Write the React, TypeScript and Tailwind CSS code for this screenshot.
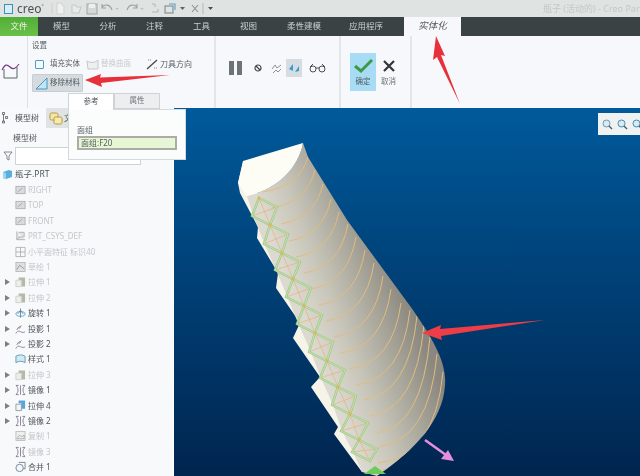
import React from 'react';

const tabs = [
  { label: '模型', w: 'w-[47px]' },
  { label: '分析', w: 'w-[46px]' },
  { label: '注释', w: 'w-[47px]' },
  { label: '工具', w: 'w-[47px]' },
  { label: '视图', w: 'w-[47px]' },
  { label: '柔性建模', w: 'w-[64px]' },
  { label: '应用程序', w: 'w-[60px] mr-[8px]' },
];

type Kind = 'plane' | 'csys' | 'facet' | 'sketch' | 'extrude' | 'extrudeOn' | 'revolve' | 'project' | 'style' | 'mirror' | 'copy' | 'merge';

const treeRows: { label: string; kind: Kind; off?: boolean; arrow?: boolean }[] = [
  { label: 'RIGHT', kind: 'plane', off: true },
  { label: 'TOP', kind: 'plane', off: true },
  { label: 'FRONT', kind: 'plane', off: true },
  { label: 'PRT_CSYS_DEF', kind: 'csys', off: true },
  { label: '小平面特征 标识40', kind: 'facet', off: true },
  { label: '草绘 1', kind: 'sketch', off: true },
  { label: '拉伸 1', kind: 'extrude', off: true, arrow: true },
  { label: '拉伸 2', kind: 'extrude', off: true, arrow: true },
  { label: '旋转 1', kind: 'revolve', arrow: true },
  { label: '投影 1', kind: 'project', arrow: true },
  { label: '投影 2', kind: 'project', arrow: true },
  { label: '样式 1', kind: 'style' },
  { label: '拉伸 3', kind: 'extrude', off: true, arrow: true },
  { label: '镜像 1', kind: 'mirror', arrow: true },
  { label: '拉伸 4', kind: 'extrudeOn', arrow: true },
  { label: '镜像 2', kind: 'mirror', arrow: true },
  { label: '复制 1', kind: 'copy', off: true },
  { label: '镜像 3', kind: 'mirror', off: true },
  { label: '合并 1', kind: 'merge' },
];

const TreeIcon = ({ kind }: { kind: Kind }) => (
  <svg width="11" height="12" viewBox="0 0 12 12" fill="none" strokeWidth="0.9" className="shrink-0">
    {kind === 'plane' && (
      <>
        <rect x="1" y="2" width="10" height="8" fill="#d9dcdc" stroke="#a9adad" />
        <path d="M3 8l5-4" stroke="#9a9e9e" />
      </>
    )}
    {kind === 'csys' && <path d="M2 1v9h9M2 10l3-3M4 2h6v5H4" stroke="#a6aaaa" fill="#e4e6e6" />}
    {kind === 'facet' && <path d="M1 1h10v10H1zM6 1v10M1 6h10" stroke="#a9adad" />}
    {kind === 'sketch' && (
      <>
        <rect x="1" y="1" width="10" height="10" fill="#dfe1e1" stroke="#b0b4b4" />
        <path d="M2 9l3-5 5 4" stroke="#8d9191" />
      </>
    )}
    {kind === 'extrude' && (
      <>
        <path d="M4 1h7v10H7V4H4z" fill="#b9b8a6" />
        <path d="M1 4h6v7H1z" fill="#eceeee" stroke="#c8cbcb" />
      </>
    )}
    {kind === 'extrudeOn' && (
      <>
        <path d="M4 0h7v9H7V3H4z" fill="#57a7dc" />
        <path d="M1 4h6v7H1z" fill="#f3f5f5" stroke="#8c9296" />
      </>
    )}
    {kind === 'revolve' && (
      <>
        <ellipse cx="6" cy="7" rx="5" ry="2.5" stroke="#4a9ad0" />
        <path d="M6 1v10M3 7l3-4 3 4" stroke="#5c7f9a" />
      </>
    )}
    {kind === 'project' && (
      <>
        <path d="M1 11c1-3 3-3 5-2s4 1 5 0" stroke="#8e6f9e" />
        <path d="M2 7c1-3 3-4 4-3M7 2L4 6" stroke="#777" />
      </>
    )}
    {kind === 'style' && <path d="M1 3c3-2 7-2 10 0v7c-3-2-7-2-10 0z" fill="#cfeaf7" stroke="#5b8ca8" />}
    {kind === 'mirror' && <path d="M6 1v10M1 1c3 2 3 8 0 10M11 1c-3 2-3 8 0 10M1 1h3M8 1h3M1 11h3M8 11h3" stroke="#7a6e8c" />}
    {kind === 'copy' && (
      <>
        <rect x="1" y="1" width="10" height="10" fill="#eceeee" stroke="#b9bcbc" />
        <path d="M2 9l3-4 2 2 3-2v4z" stroke="#a6aaaa" />
      </>
    )}
    {kind === 'merge' && (
      <>
        <circle cx="5" cy="7" r="4" fill="#f5f8fa" stroke="#63788a" />
        <path d="M4 1h7v7H9" stroke="#63788a" />
      </>
    )}
  </svg>
);

const TreeRow = ({ label, kind, off, arrow }: { label: string; kind: Kind; off?: boolean; arrow?: boolean }) => (
  <div className="flex h-[15.4px] items-center">
    <span className="flex w-[15px] shrink-0 justify-center">
      {arrow && <span className="h-0 w-0 border-y-[3px] border-l-[5px] border-y-transparent border-l-[#7b8082]" />}
    </span>
    <TreeIcon kind={kind} />
    <span className={`ml-[2px] whitespace-nowrap text-[8px] ${off ? 'text-[#c3c7c9]' : 'text-[#4d5558]'}`}>{label}</span>
  </div>
);

// quick access toolbar, drawn from x=50 of the page
const QuickIcons = () => (
  <svg width="166" height="17" viewBox="50 0 166 17" fill="none" strokeWidth="1.1" className="absolute left-[50px] top-0">
    <path d="M52 3v11" stroke="#ccd0d0" />
    <path d="M57 3h4l3 3v8h-7z" fill="#eef0f0" stroke="#cfd3d3" />
    <path d="M72 13V5h3l2 2h4l-2 6z" fill="#e8eaea" stroke="#c5c9c9" />
    <rect x="87" y="4" width="10" height="10" fill="#d4d8d8" stroke="#a6abab" />
    <rect x="89" y="4" width="6" height="4" fill="#eef0f0" />
    <path d="M102 7c3-3 8-3 10 3M102 4v4h4" stroke="#9aa0a3" />
    <path d="M115 8h4l-2 2z" fill="#c0c4c4" />
    <path d="M137 7c-3-3-8-3-10 3M137 4v4h-4" stroke="#9aa0a3" />
    <path d="M140 8h4l-2 2z" fill="#c0c4c4" />
    <path d="M152 4h3M155 4v3M152 12h6M158 9v3" stroke="#b3b7b7" />
    <rect x="165" y="6" width="8" height="7" stroke="#7d8a92" />
    <path d="M169 4h6v6" stroke="#59a0cc" />
    <path d="M180 7h5l-2.5 3z" fill="#5e6468" />
    <path d="M192 5l6 7M198 5l-6 7" stroke="#8b9093" />
    <path d="M203 3v11" stroke="#b9bdbd" />
    <path d="M208 7h5l-2.5 3z" fill="#4a5154" />
  </svg>
);

const bodyNodes: [number, number][] = [
  [259, 198], [270, 225], [282, 253], [293, 279], [304, 306], [315, 333], [327, 361], [338, 387], [350, 414], [359, 440], [370, 461],
];

const arcs: [number, number, number, number][] = [
  [263, 192, 308, 157], [272, 208, 315, 170], [281, 224, 323, 184], [289, 241, 331, 199],
  [296, 257, 339, 212], [304, 273, 348, 224], [311, 289, 356, 237], [319, 305, 365, 250],
  [326, 321, 374, 263], [334, 337, 383, 276], [341, 353, 391, 289], [349, 369, 401, 303],
  [356, 385, 410, 310], [363, 400, 417, 316], [370, 416, 424, 325], [377, 433, 430, 337],
  [378, 447, 437, 354], [378, 463, 443, 372], [382, 470, 446, 392],
];

const bodyPath =
  'M303 143L308 157L347 220L413 310C432 338 447 362 445 385C443 420 415 450 377 476L362 472L353 452L342 431L333 405L321 378L310 350L298 323L287 296L276 270L264 243L253 215L247 196C275 190 298 170 303 143Z';

const Model = () => (
  <svg width="466" height="368" viewBox="174 108 466 368" className="absolute left-0 top-0">
    <defs>
      <linearGradient id="bodyShade" gradientUnits="userSpaceOnUse" x1="296" y1="300" x2="393" y2="262">
        <stop offset="0" stopColor="#dcdad0" />
        <stop offset="0.3" stopColor="#c9c6bb" />
        <stop offset="0.65" stopColor="#aaa79c" />
        <stop offset="1" stopColor="#8a8780" />
      </linearGradient>
      <clipPath id="bodyClip">
        <path d={bodyPath} />
      </clipPath>
    </defs>
    {/* white strip with the stepped edge */}
    <path
      d="M243 162L238 183L240 193L258 227L257 238L278 273L276 288L300 323L293 338L320 377L311 387L338 427L334 434L362 472L378 472L300 250L255 190Z"
      fill="#f6f4e8"
    />
    <path d={bodyPath} fill="url(#bodyShade)" />
    {/* top face */}
    <path d="M243 161L303 143C298 170 275 190 247 196L238 183Z" fill="#fdfdf5" />
    <g clipPath="url(#bodyClip)">
      {arcs.map(([x1, y1, x2, y2], i) => (
        <path key={i} d={`M${x1} ${y1}Q${x2 - 8} ${y1 - 6} ${x2} ${y2}`} fill="none" stroke="#e2bd7c" strokeWidth="1" />
      ))}
    </g>
    {bodyNodes.slice(0, -1).map(([x, y], i) => {
      const [nx, ny] = bodyNodes[i + 1];
      const rx = x + 18;
      const ry = y + 9;
      const lx = nx - 18;
      const ly = ny - 9;
      const d = `M${x} ${y}L${rx} ${ry}L${nx} ${ny}L${lx} ${ly}Z`;
      return (
        <g key={i} fill="none">
          <path d={`M${x} ${y}L${nx} ${ny}M${rx} ${ry}L${lx} ${ly}`} stroke="#e8b07a" strokeWidth="0.7" />
          <path d={d} stroke="#9ccb8a" strokeWidth="2.4" />
          <path d={d} stroke="#dfe6bc" strokeWidth="0.7" />
          <circle cx={x} cy={y} r="1.4" fill="#eeb14a" />
        </g>
      );
    })}
    <path d="M364 474L375 466L386 474Z" fill="#6ecb5a" />
    {/* direction arrow */}
    <path d="M425 440L446 455" stroke="#e48fdc" strokeWidth="2.6" />
    <path d="M454 461L441 459L448 450Z" fill="#e48fdc" />
  </svg>
);

const Callouts = () => (
  <svg width="640" height="476" viewBox="0 0 640 476" className="pointer-events-none absolute left-0 top-0">
    <path d="M85 80L101 74L100 77.5L170 75L101 83L102 87Z" fill="#e8303a" />
    <path d="M436 36L445 56L441 55L460 104L437 57L433 60Z" fill="#e8303a" />
    <path d="M422 333L441 325L440 329L545 320L441 336L442 340Z" fill="#ee3d46" />
  </svg>
);

export default function App() {
  return (
    <div
      className="relative h-[476px] w-[640px] overflow-hidden bg-[#f7f9fb] blur-[0.35px]"
      style={{ fontFamily: '"Noto Sans", "Noto Sans CJK SC", sans-serif' }}
    >
      {/* title bar */}
      <div className="relative flex h-[17px] items-center bg-[#dfe4e3]">
        <span className="ml-[4px] h-[10px] w-[9px] border border-[#3f8fb8] bg-[#d8eef8]" />
        <span className="ml-[4px] text-[12px] leading-none text-[#4a5154]">creo</span>
        <span className="mb-[4px] text-[5px] leading-none text-[#4a5154]">°</span>
        <QuickIcons />
        <span className="ml-auto w-[97px] overflow-hidden whitespace-nowrap text-[9px] text-[#c3c7c7]">瓶子 (活动的) - Creo Parametric</span>
      </div>

      {/* ribbon tabs */}
      <div className="flex h-[19px] items-stretch bg-[#3a4244]">
        <div className="flex w-[38px] items-center justify-center bg-gradient-to-b from-[#4fae36] to-[#6cc04a] text-[8.5px] text-[#e8f5e0]">文件</div>
        {tabs.map((t) => (
          <div key={t.label} className={`flex items-center justify-center text-[8.5px] text-[#c9cecf] ${t.w}`}>
            {t.label}
          </div>
        ))}
        <div className="flex w-[57px] items-center justify-center bg-[#f6f8fb] text-[9.5px] italic text-[#555c60]">实体化</div>
      </div>

      {/* ribbon */}
      <div className="flex h-[72px] items-stretch bg-[#f6f8fb]">
        <div className="flex w-[28px] shrink-0 items-center border-r border-[#dfe2e4] pl-[1px]">
          <svg width="20" height="20" viewBox="0 0 20 20" fill="none" className="mb-[4px]">
            <path d="M3 9v9h13V7" stroke="#5a6266" strokeWidth="1" />
            <path d="M1 10c3-6 5-6 8-3s5 2 9-3" stroke="#7d3c86" strokeWidth="1.2" />
          </svg>
        </div>
        <div className="flex w-[188px] shrink-0 flex-col border-r-2 border-[#e3e6e8] pl-[4px] pt-[3px]">
          <div className="text-[7.5px] leading-[13px] text-[#555c60]">设置</div>
          <div className="mt-[3px] flex h-[18px] items-center">
            <span className="ml-[3px] h-[9px] w-[9px] rounded-[1px] border border-[#4f9cc8] bg-[#f2fafd]" />
            <span className="ml-[6px] whitespace-nowrap text-[7.5px] text-[#555c60]">填充实体</span>
            <svg width="13" height="11" viewBox="0 0 13 11" fill="none" className="ml-[6px] shrink-0">
              <path d="M1 2c3 2 8 2 11-1v9H2z" fill="#eef0f0" stroke="#c5c9c9" />
            </svg>
            <span className="ml-[2px] whitespace-nowrap text-[7.5px] text-[#c8cccd]">替换曲面</span>
            <svg width="12" height="12" viewBox="0 0 12 12" fill="none" className="ml-[15px] shrink-0">
              <path d="M1 11L11 2" stroke="#454c50" strokeWidth="1.4" />
              <path d="M2 2h3M8 10h3" stroke="#7a8084" strokeWidth="1.2" strokeDasharray="1 1" />
            </svg>
            <span className="ml-[2px] whitespace-nowrap text-[8px] text-[#555c60]">刀具方向</span>
          </div>
          <div className="mt-[1px] flex h-[18px] w-[51px] items-center rounded-[1px] border border-[#c7ced2] bg-[#d5dbdf]">
            <svg width="13" height="13" viewBox="0 0 13 13" className="ml-[2px] shrink-0">
              <path d="M1 12L12 1V12Z" fill="#bfe6f5" stroke="#3d8cb8" strokeWidth="0.9" />
            </svg>
            <span className="ml-[2px] whitespace-nowrap text-[7.5px] text-[#555c60]">移除材料</span>
          </div>
        </div>
        <div className="flex w-[125px] shrink-0 items-center border-r-2 border-[#e3e6e8] pb-[8px] pl-[13px]">
          <span className="h-[14px] w-[5px] bg-[#6d7477]" />
          <span className="ml-[3px] h-[14px] w-[5px] bg-[#6d7477]" />
          <svg width="8" height="8" viewBox="0 0 8 8" fill="none" className="ml-[12px]">
            <circle cx="4" cy="4" r="3" stroke="#41484c" strokeWidth="1.2" />
            <path d="M2 2l4 4" stroke="#41484c" strokeWidth="1.2" />
          </svg>
          <svg width="11" height="11" viewBox="0 0 11 11" fill="none" className="ml-[9px]">
            <path d="M1 6l3-4 2 3 4-3M2 10l3-3 2 2 3-3" stroke="#8b9093" />
          </svg>
          <span className="ml-[4px] flex h-[18px] w-[16px] items-center justify-center bg-[#d6dde2]">
            <svg width="12" height="11" viewBox="0 0 12 11">
              <path d="M1 6l4-5v7zM7 9l4-6v5z" fill="#3d9ccc" />
            </svg>
          </span>
          <svg width="17" height="10" viewBox="0 0 17 10" fill="none" className="ml-[7px]">
            <circle cx="4" cy="6" r="3" stroke="#4a5154" />
            <circle cx="13" cy="6" r="3" stroke="#4a5154" />
            <path d="M7 5h3M1 4l3-3M13 1l3 3" stroke="#4a5154" />
          </svg>
        </div>
        <div className="flex w-[71px] shrink-0 items-start border-r-2 border-[#e3e6e8] pl-[9px] pt-[17px]">
          <div className="flex h-[38px] w-[26px] flex-col items-center bg-[#a8dcf5] pt-[6px]">
            <svg width="19" height="14" viewBox="0 0 19 14" fill="none">
              <path d="M1 7l6 5L18 1" stroke="#3f9a48" strokeWidth="3" />
            </svg>
            <span className="mt-[2px] text-[7.5px] leading-[12px] text-[#4f5a60]">确定</span>
          </div>
          <div className="ml-[4px] flex h-[38px] w-[17px] flex-col items-center pt-[7px]">
            <svg width="12" height="12" viewBox="0 0 12 12" fill="none">
              <path d="M1 1l10 10M11 1L1 11" stroke="#30363a" strokeWidth="2.2" />
            </svg>
            <span className="mt-[3px] whitespace-nowrap text-[7.5px] leading-[12px] text-[#6a7175]">取消</span>
          </div>
        </div>
      </div>

      {/* workspace */}
      <div className="flex h-[368px]">
        <div className="w-[174px] shrink-0 border-r border-white bg-[#f7f9fb]">
          <div className="flex h-[20px] items-center">
            <svg width="6" height="12" viewBox="0 0 6 12" fill="none" className="ml-[2px]">
              <path d="M0.5 0.5h2v2h-2zM3.5 4.5h2v2h-2zM0.5 9h2v2h-2zM1.5 2.5v7" stroke="#555c60" strokeWidth="0.8" />
            </svg>
            <span className="ml-[7px] text-[8px] text-[#4d5558]">模型树</span>
            <div className="ml-[7px] flex h-[20px] w-[24px] items-center justify-start bg-[#dfe3e3] pl-[3px]">
              <svg width="14" height="13" viewBox="0 0 14 13" fill="none" className="shrink-0">
                <rect x="1" y="1" width="8" height="7" rx="1.5" fill="#f5e6a8" stroke="#b59a3e" />
                <rect x="5" y="5" width="8" height="7" rx="1.5" fill="#f7e9b2" stroke="#b59a3e" />
              </svg>
              <span className="ml-[1px] text-[8px] text-[#4d5558]">文</span>
            </div>
          </div>
          <div className="flex h-[19px] items-center pl-[13px] text-[8px] text-[#555c60]">模型树</div>
          <div className="flex h-[18px] items-center">
            <svg width="10" height="10" viewBox="0 0 10 10" fill="none" className="ml-[3px]">
              <path d="M1 1h8L6 5v4L4 8V5z" stroke="#6a7175" strokeWidth="0.8" />
            </svg>
            <span className="ml-[2px] h-[18px] w-[126px] border border-[#cdd2d4] bg-white" />
          </div>
          <div className="mt-[2px] flex h-[15.4px] items-center pl-[3px]">
            <svg width="9" height="9" viewBox="0 0 9 9" className="shrink-0">
              <path d="M0 2l6-2 3 1v6L3 9 0 8z" fill="#58aede" />
              <path d="M0 2l3 1v6L0 8z" fill="#9ed3ee" />
            </svg>
            <span className="ml-[3px] text-[8.5px] text-[#4d5558]">瓶子.PRT</span>
          </div>
          {treeRows.map((r) => (
            <TreeRow key={r.label} {...r} />
          ))}
        </div>
        <div className="relative grow bg-gradient-to-b from-[#005a9b] to-[#00254f]">
          <Model />
          <div className="absolute right-0 top-[5px] flex h-[22px] w-[42px] items-center gap-[4px] bg-[#f0f2f2] pl-[4px]">
            {['#6a9ab5', '#3f8fb8', '#3f8fb8'].map((c, i) => (
              <svg key={i} width="11" height="11" viewBox="0 0 11 11" fill="none" className="shrink-0">
                <circle cx="4.5" cy="4.5" r="3.5" fill="#dbeaf2" stroke={c} />
                <path d="M7 7l3 3" stroke="#555c60" strokeWidth="1.4" />
              </svg>
            ))}
          </div>
        </div>
      </div>

      {/* dashboard slide-up panel */}
      <div className="absolute left-[68px] top-[93px] w-[118px]">
        <div className="flex h-[16px] text-[7.5px]">
          <div className="z-10 -mb-px flex w-[46px] items-center justify-center border border-b-0 border-[#cfd3d5] bg-white text-[#4d5558]">参考</div>
          <div className="flex w-[46px] items-center justify-center border border-[#cfd3d5] bg-[#eceeef] text-[#6a7175]">属性</div>
        </div>
        <div className="h-[51px] border border-[#d5d9da] bg-[#fbfcfc] px-[8px] pt-[14px]">
          <div className="text-[8px] leading-[12px] text-[#5b6367]">面组</div>
          <div className="flex h-[14px] items-center border-2 border-[#a9ada6] bg-[#e7f7d5] pl-[2px] text-[8px] text-[#555c60]">面组:F20</div>
        </div>
      </div>

      <Callouts />
    </div>
  );
}
